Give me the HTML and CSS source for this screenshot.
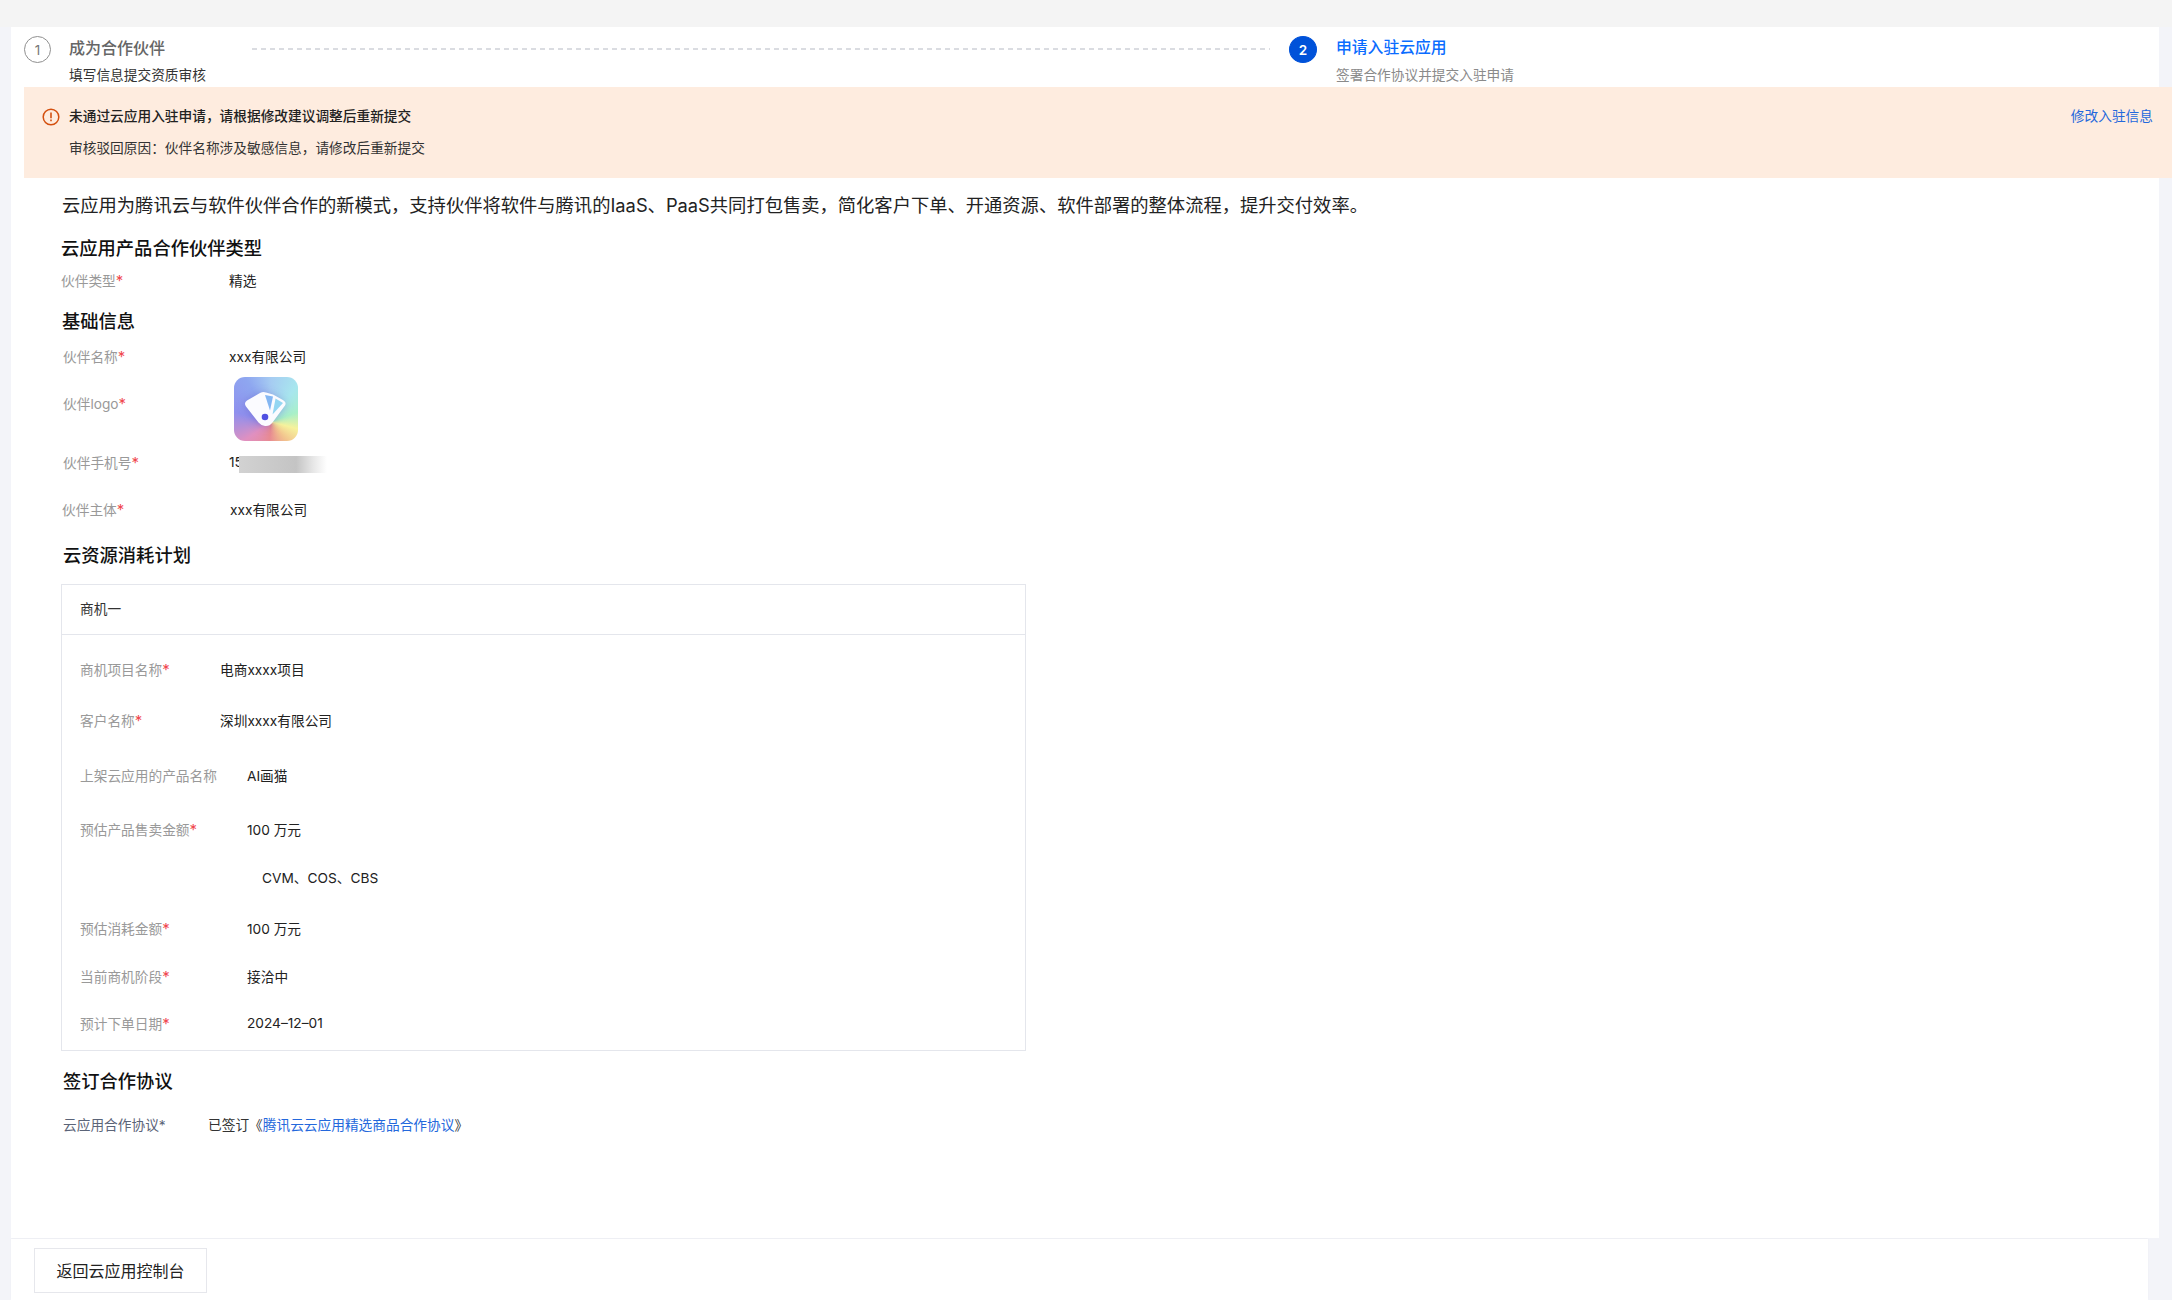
FILE: index.html
```html
<!DOCTYPE html>
<html lang="zh-CN">
<head>
<meta charset="utf-8">
<title>申请入驻云应用</title>
<link rel="stylesheet" href="styles.css">
</head>
<body>
<main class="panel">
  <header class="steps">
    <div class="step step-first">
      <span class="step-num">1</span>
      <div class="step-text">
        <div class="step-title">成为合作伙伴</div>
        <div class="step-sub step-sub-dark">填写信息提交资质审核</div>
      </div>
    </div>
    <div class="step-line"></div>
    <div class="step">
      <span class="step-num step-num-active">2</span>
      <div class="step-text">
        <div class="step-title step-title-active">申请入驻云应用</div>
        <div class="step-sub">签署合作协议并提交入驻申请</div>
      </div>
    </div>
  </header>

  <section class="notice">
    <svg class="notice-icon" viewBox="0 0 18 18" aria-hidden="true"><circle cx="9" cy="9" r="7.8" fill="none" stroke="#d4500f" stroke-width="1.5"/><path d="M9 4.6v5.6" stroke="#d4500f" stroke-width="1.6" fill="none"/><path d="M9 11.6v1.7" stroke="#d4500f" stroke-width="1.6" fill="none"/></svg>
    <div class="notice-body">
      <div class="notice-title">未通过云应用入驻申请，请根据修改建议调整后重新提交</div>
      <div class="notice-reason">审核驳回原因：伙伴名称涉及敏感信息，请修改后重新提交</div>
    </div>
    <a class="notice-link">修改入驻信息</a>
  </section>

  <p class="intro">云应用为腾讯云与软件伙伴合作的新模式，支持伙伴将软件与腾讯的IaaS、PaaS共同打包售卖，简化客户下单、开通资源、软件部署的整体流程，提升交付效率。</p>

  <h2 class="heading h-type">云应用产品合作伙伴类型</h2>
  <div class="row h38 row-tight"><span class="label">伙伴类型<i>*</i></span><span class="value">精选</span></div>

  <h2 class="heading h-base">基础信息</h2>
  <div class="row h26"><span class="label">伙伴名称<i>*</i></span><span class="value">xxx有限公司</span></div>
  <div class="row h78">
    <span class="label label-up">伙伴logo<i>*</i></span>
    <span class="logo">
      <svg viewBox="0 0 64 64" aria-hidden="true">
        <path d="M26 16 Q29 14.5 32 15.5 L39 17.5 L48 22.5 Q53 25 51 28.5 L38.5 45.5 Q35.5 49.5 31 49 Q27 48.5 24.5 45.5 L12 29.5 Q9.5 26 13 23.5Z" fill="#fbfbff"/>
        <path d="M31 18 L39 19.5 L36 33.5Z" fill="#84b6f2"/>
        <path d="M41.5 21.5 L49 26 L38.5 37.5Z" fill="#94d6f2"/>
        <circle cx="31" cy="40" r="3.3" fill="#5050e2"/>
      </svg>
    </span>
  </div>
  <div class="row h30"><span class="label">伙伴手机号<i>*</i></span><span class="value phone">15<span class="smudge"></span></span></div>
  <div class="row h64 row-subject"><span class="label">伙伴主体<i>*</i></span><span class="value">xxx有限公司</span></div>

  <h2 class="heading h-plan">云资源消耗计划</h2>
  <section class="card">
    <div class="card-head">商机一</div>
    <div class="card-row h70"><span class="label">商机项目名称<i>*</i></span><span class="value">电商xxxx项目</span></div>
    <div class="card-row h31"><span class="label">客户名称<i>*</i></span><span class="value">深圳xxxx有限公司</span></div>
    <div class="card-row card-row-wide h79"><span class="label">上架云应用的产品名称</span><span class="value">AI画猫</span></div>
    <div class="card-row card-row-wide h30"><span class="label">预估产品售卖金额<i>*</i></span><span class="value">100 万元</span></div>
    <div class="card-row card-row-indent h66"><span class="label"></span><span class="value">CVM、COS、CBS</span></div>
    <div class="card-row card-row-wide h36"><span class="label">预估消耗金额<i>*</i></span><span class="value">100 万元</span></div>
    <div class="card-row card-row-wide h59"><span class="label">当前商机阶段<i>*</i></span><span class="value">接洽中</span></div>
    <div class="card-row card-row-wide h36"><span class="label">预计下单日期<i>*</i></span><span class="value">2024–12–01</span></div>
  </section>

  <h2 class="heading h-sign">签订合作协议</h2>
  <div class="row agreement"><span class="label">云应用合作协议*</span><span class="value">已签订《<a class="link">腾讯云云应用精选商品合作协议</a>》</span></div>
</main>
<footer class="footer">
  <button class="back">返回云应用控制台</button>
</footer>
</body>
</html>
```

FILE: styles.css
```css
* { box-sizing: border-box; }
html, body { height: 100%; }
body {
  margin: 0;
  height: 1300px;
  overflow: hidden;
  background: #f3f4f9;
  padding: 27px 0 0 11px;
  position: relative;
  font-family: Inter, "Noto Sans CJK SC", sans-serif;
  font-size: 13.7px;
  color: #1f1f1f;
}
body::before {
  content: "";
  position: absolute;
  left: 0; top: 0; right: 0;
  height: 27px;
  background: #f4f4f4;
}
.panel {
  position: relative;
  width: 2148px;
  height: 1211px;
  background: #fff;
}
.steps { display: flex; height: 60px; padding: 9px 0 0 13px; }
.step { display: flex; flex: none; }
.step-first { width: 228px; }
.step-num {
  flex: none;
  width: 27px; height: 27px;
  border: 1.3px solid #8f8f8f;
  border-radius: 50%;
  display: flex; align-items: center; justify-content: center;
  font-size: 13.5px;
  color: #777;
}
.step-num-active { background: #0052d9; border-color: #0052d9; color: #fff; font-weight: 600; width: 28px; }
.step-text { margin-left: 18px; }
.step-num-active + .step-text { margin-left: 19px; }
.step-title { font-size: 16px; line-height: 24px; font-weight: 500; color: #666; }
.step-title-active { color: #0a6cff; font-size: 15.8px; }
.step-sub { font-size: 13.7px; line-height: 20px; margin-top: 5px; color: #8a8a8a; }
.step-sub-dark { color: #333; }
.step-line {
  flex: none;
  width: 1018px; height: 2px;
  margin: 12px 19px 0 0;
  background: repeating-linear-gradient(90deg, #dadce1 0, #dadce1 5px, transparent 5px, transparent 9px);
}

.notice {
  display: flex;
  height: 91px;
  margin: 0 -13px 0 13px;
  padding: 20px 19px 0 18px;
  background: #feecdf;
}
.notice-icon { flex: none; width: 18px; height: 18px; margin: 1px 9px 0 0; }
.notice-body { flex: 1; }
.notice-title { line-height: 18px; font-weight: 500; color: #222; }
.notice-reason { line-height: 18px; margin-top: 14px; color: #333; }
.notice-link { line-height: 18px; color: #2468dc; }

.intro { margin: 0; height: 56px; padding-left: 51px; font-size: 18.3px; line-height: 55px; color: #222; }
.heading { margin: 0; font-size: 18.3px; font-weight: 500; color: #111; padding-left: 50px; }
.h-type { line-height: 28px; }
.h-base { height: 44px; line-height: 42px; padding-left: 51px; }
.h-plan { line-height: 26px; padding-left: 52px; }
.h-sign { line-height: 30px; height: 30px; margin-top: 15px; padding-left: 52px; }

.row { display: flex; align-items: center; padding: 0 0 2px 52px; }
.row-tight { padding-left: 50px; }
.row .label { width: 166px; flex: none; }
.row-tight .label { width: 168px; }
.row-subject { padding-left: 51px; }
.row-subject .label { width: 168px; }
.label { color: #999; }
.label i { font-style: normal; font-size: 15px; line-height: 1; color: #f0484f; }
.value { color: #222; }
.label-up { margin-top: -10px; }
.logo {
  position: relative;
  flex: none;
  width: 64px; height: 64px;
  margin: 2px 0 0 5px;
  border-radius: 11px;
  overflow: hidden;
  background: conic-gradient(from 0deg at 58% 70%, #a6ccf2 0deg, #a8e6ee 35deg, #a8f0c8 70deg, #f6f29c 105deg, #f2c48e 140deg, #e88a92 185deg, #e090c0 235deg, #8f90ee 285deg, #8ea6f0 330deg, #a6ccf2 360deg);
}
.logo svg { position: absolute; inset: 0; width: 100%; height: 100%; filter: drop-shadow(0 1px 4px rgba(70,50,170,.3)); }
.phone { position: relative; }
.smudge {
  position: absolute;
  left: 10px; top: 2px;
  width: 88px; height: 17px;
  background: linear-gradient(90deg, #d2d2d2 0, #c4c4c4 65%, #e8e8e8 85%, #fff 100%);
}

.card {
  width: 965px;
  height: 467px;
  margin: 16px 0 0 50px;
  border: 1px solid #e4e6ec;
  display: flex;
  flex-direction: column;
}
.card-head {
  flex: none;
  height: 50px;
  padding-left: 18px;
  line-height: 48px;
  border-bottom: 1px solid #e4e6ec;
  color: #333;
}
.card-row { flex: none; display: flex; align-items: center; padding: 0 0 2px 18px; }
.card-row .label { width: 140px; flex: none; }
.card-row-wide .label { width: 167px; }
.card-row-indent .label { width: 182px; }

.h26 { height: 26px; } .h30 { height: 30px; } .h31 { height: 31px; }
.h36 { height: 36px; } .h38 { height: 38px; } .h59 { height: 59px; }
.h64 { height: 64px; } .h66 { height: 66px; } .h70 { height: 70px; }
.h78 { height: 78px; } .h79 { height: 79px; }

.agreement { height: 30px; margin-top: 14px; }
.agreement .label { width: 145px; color: #5b6478; }
.agreement .value { color: #333; }
.link { color: #2468dc; }

.footer {
  width: 2137px;
  height: 61px;
  margin-top: 1px;
  padding: 9px 0 0 23px;
  background: #fff;
  box-shadow: 0 -1px 2px rgba(0,0,0,.03);
}
.back {
  width: 173px; height: 45px;
  padding: 0 0 2px;
  background: #fff;
  border: 1px solid #e6e7ec;
  font: inherit;
  font-size: 16px;
  color: #222;
}
```
